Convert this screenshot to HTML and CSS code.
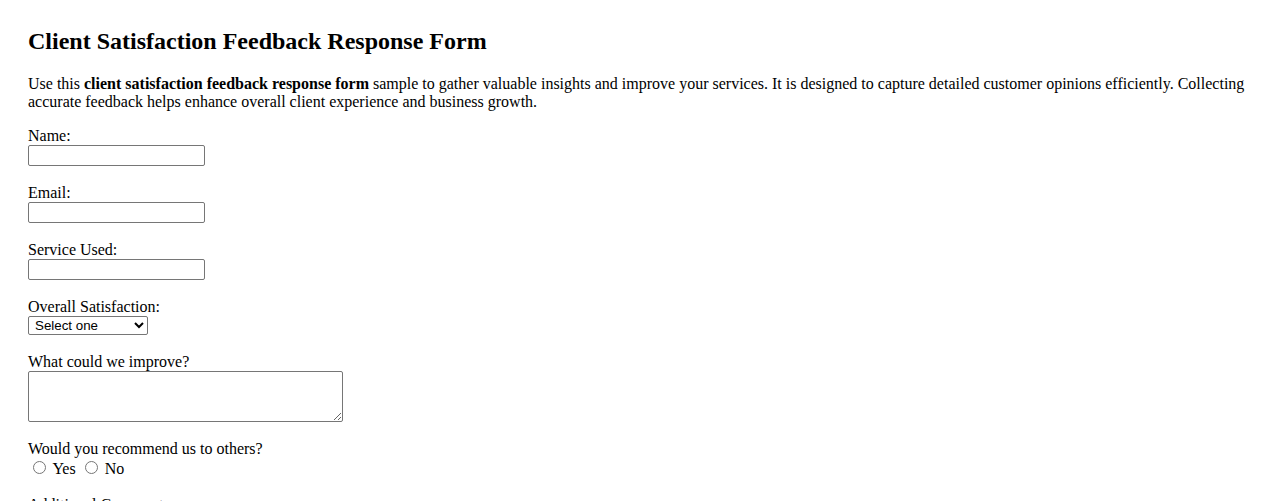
FILE: index.html
```html
<!DOCTYPE html>
<html lang="en">
<head>
    <meta charset="UTF-8">
    <meta name="viewport" content="width=device-width, initial-scale=1.0">
    <title>Client Satisfaction Feedback Response Form</title>
    <link rel="stylesheet" href="styles.css">
</head>
<body>
    <div class="page">
        <h2>Client Satisfaction Feedback Response Form</h2>

        <p>Use this <strong>client satisfaction feedback response form</strong> sample to gather valuable insights and improve your services. It is designed to capture detailed customer opinions efficiently. Collecting accurate feedback helps enhance overall client experience and business growth.</p>

        <form class="feedback-form">
            <label for="name">Name:</label><br>
            <input type="text" id="name" name="name" class="text-field"><br><br>

            <label for="email">Email:</label><br>
            <input type="email" id="email" name="email" class="text-field"><br><br>

            <label for="service">Service Used:</label><br>
            <input type="text" id="service" name="service" class="text-field"><br><br>

            <label for="satisfaction">Overall Satisfaction:</label><br>
            <select id="satisfaction" name="satisfaction" class="select-field">
                <option value="">Select one</option>
                <option value="5">Very Satisfied</option>
                <option value="4">Satisfied</option>
                <option value="3">Neutral</option>
                <option value="2">Dissatisfied</option>
                <option value="1">Very Dissatisfied</option>
            </select><br><br>

            <label for="improve">What could we improve?</label><br>
            <textarea id="improve" name="improve" rows="3" class="text-area"></textarea><br><br>

            <label>Would you recommend us to others?</label><br>
            <input type="radio" id="rec-yes" name="recommend" value="yes" class="radio"> <label for="rec-yes">Yes</label>
            <input type="radio" id="rec-no" name="recommend" value="no" class="radio"> <label for="rec-no">No</label><br><br>

            <label for="comments">Additional Comments:</label><br>
            <textarea id="comments" name="comments" rows="4" class="text-area"></textarea><br><br>

            <button type="submit" class="submit-btn">Submit Feedback</button>
        </form>
    </div>
</body>
</html>
```

FILE: styles.css
```css
body {
    margin: 0;
    background: #fff;
    color: #000;
    font-family: 'Liberation Serif', 'Times New Roman', serif;
    font-size: 16px;
}

.page {
    padding: 28px 28px;
}

h2 {
    font-size: 24px;
    font-weight: bold;
    margin: 0 0 20px;
}

p {
    margin: 0 0 16px;
}

.text-field {
    box-sizing: border-box;
    width: 177px;
    height: 21px;
    margin: 0;
    padding: 1px 2px;
    border: 1px solid #767676;
    border-radius: 2px;
    font-family: 'Liberation Sans', Arial, sans-serif;
    font-size: 13.33px;
    vertical-align: middle;
}

.select-field {
    box-sizing: border-box;
    width: 120px;
    height: 19px;
    margin: 0;
    padding: 0 0 0 2px;
    border: 1px solid #767676;
    border-radius: 2px;
    background: #fff;
    font-family: 'Liberation Sans', Arial, sans-serif;
    font-size: 13.33px;
    color: #000;
}

.text-area {
    box-sizing: border-box;
    width: 315px;
    height: 51px;
    margin: 0;
    padding: 2px;
    border: 1px solid #767676;
    border-radius: 2px;
    font-family: 'Liberation Mono', 'Courier New', monospace;
    font-size: 13.33px;
    vertical-align: bottom;
}

.radio {
    margin: 3px 3px 0 5px;
    width: 13px;
    height: 13px;
}

.submit-btn {
    font-family: 'Liberation Sans', Arial, sans-serif;
    font-size: 13.33px;
}
```
